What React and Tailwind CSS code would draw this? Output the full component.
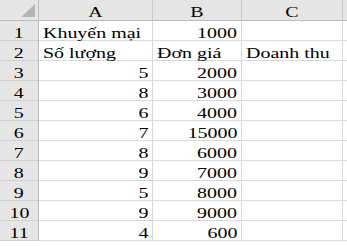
const cols = ["A", "B", "C"];

const rows = [
  ["Khuyến mại", "1000", ""],
  ["Số lượng", "Đơn giá", "Doanh thu"],
  ["5", "2000", ""],
  ["8", "3000", ""],
  ["6", "4000", ""],
  ["7", "15000", ""],
  ["8", "6000", ""],
  ["9", "7000", ""],
  ["5", "8000", ""],
  ["9", "9000", ""],
  ["4", "600", ""],
];

const isNum = (v) => /^\d+$/.test(v);

function Txt({ children, align }) {
  const origin =
    align === "right" ? "origin-right" : align === "center" ? "origin-center" : "origin-left";
  return <span className={`inline-block scale-x-[1.33] whitespace-nowrap ${origin}`}>{children}</span>;
}

export default function App() {
  return (
    <div
      className="w-[347px] h-[246px] overflow-hidden bg-white text-black text-[15px]"
      style={{ fontFamily: '"Liberation Serif", "Times New Roman", serif' }}
    >
      <div className="grid grid-cols-[39px_114px_89px_101px_20px] grid-rows-[21px_repeat(11,20px)]">
        {/* góc trái trên */}
        <div className="relative bg-[#e6e6e6] border-r border-b border-[#bcbcbc]">
          <div className="absolute right-[3px] bottom-[3px] w-0 h-0 border-l-[14px] border-l-transparent border-b-[13px] border-b-[#b5b5b5]" />
        </div>
        {cols.map((c) => (
          <div
            key={c}
            className="bg-[#e6e6e6] border-r border-b border-r-[#c8c8c8] border-b-[#bcbcbc] text-center leading-[14px] pt-[5px]"
          >
            <Txt align="center">{c}</Txt>
          </div>
        ))}
        <div className="bg-[#e6e6e6] border-b border-[#bcbcbc]" />

        {rows.map((r, i) => (
          <div key={i} className="contents">
            <div className="bg-[#e6e6e6] border-r border-r-[#bcbcbc] border-b border-b-[#d0d0d0] text-center leading-[14px] pt-[5px]">
              <Txt align="center">{i + 1}</Txt>
            </div>
            {r.map((v, j) => {
              const right = isNum(v);
              return (
                <div
                  key={j}
                  className={`border-r border-b border-[#d9d9d9] leading-[14px] pt-[5px] overflow-visible ${
                    right ? "text-right pr-[4px]" : "text-left pl-[4px]"
                  }`}
                >
                  {v && <Txt align={right ? "right" : "left"}>{v}</Txt>}
                </div>
              );
            })}
            <div className="border-b border-[#d9d9d9]" />
          </div>
        ))}
      </div>
    </div>
  );
}
